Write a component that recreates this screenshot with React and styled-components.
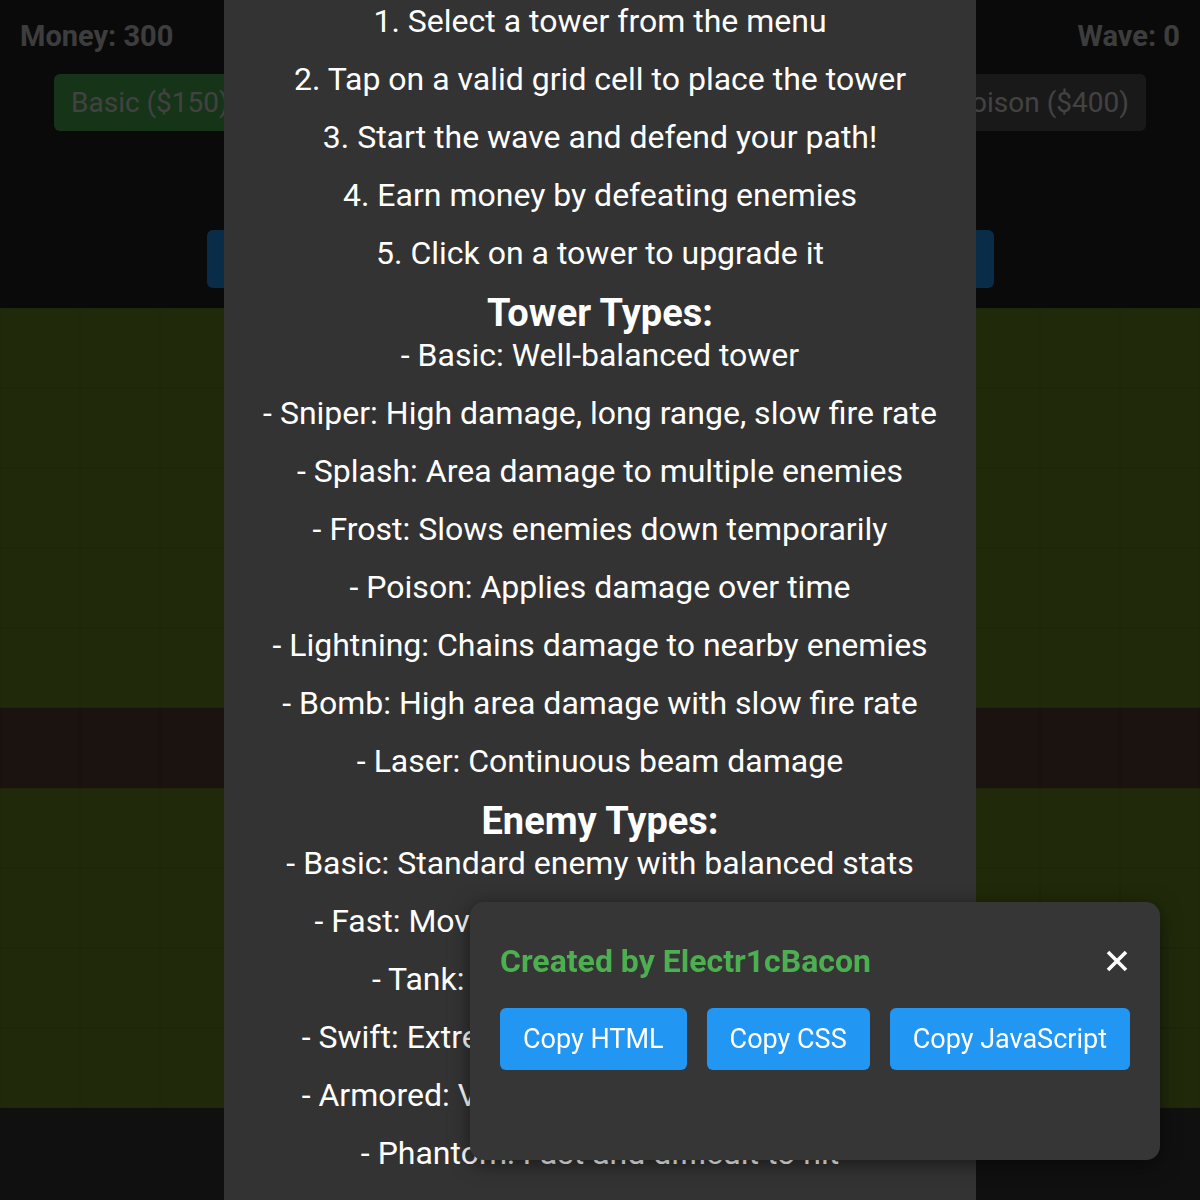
import styled, { createGlobalStyle } from "styled-components";

const GlobalStyle = createGlobalStyle`
  html, body {
    margin: 0;
    padding: 0;
    background: #242424;
    font-family: Roboto, "Liberation Sans", sans-serif;
  }
`;

const Game = styled.div`
  height: 1200px;
  display: flex;
  flex-direction: column;
  overflow: hidden;
  color: #ccc;
`;

const Header = styled.div`
  height: 72px;
  padding: 0 20px;
  display: flex;
  align-items: center;
  justify-content: space-between;
  font-size: 29px;
  font-weight: 700;
`;

const TowerRow = styled.div`
  display: flex;
  justify-content: ${(p) => (p.$center ? "center" : "space-between")};
  gap: 20px;
  padding: 0 54px;
  margin-top: ${(p) => p.$top}px;
`;

const TowerButton = styled.button`
  flex-shrink: 0;
  height: 57px;
  padding: 0 17px;
  border: none;
  border-radius: 6px;
  font-family: inherit;
  font-size: 28px;
  white-space: nowrap;
  color: #ddd;
  background: ${(p) => (p.$active ? "#4caf50" : "#555")};
`;

const Controls = styled.div`
  width: 787px;
  margin: 25px auto 0;
  display: flex;
  gap: 16px;
`;

const ControlButton = styled.button`
  flex: 1;
  height: 58px;
  border: none;
  border-radius: 6px;
  font-family: inherit;
  font-size: 28px;
  color: #fff;
  background: #2196f3;
`;

const Board = styled.div`
  margin-top: 20px;
  display: grid;
  grid-template-columns: repeat(15, 80px);
  grid-auto-rows: 80px;
`;

const Cell = styled.div`
  box-sizing: border-box;
  background: ${(p) => (p.$path ? "#5d4037" : "#6b8e23")};
  border: 1px solid rgba(0, 0, 0, 0.08);
`;

const Footer = styled.div`
  flex: 1;
  background: #383838;
`;

const Overlay = styled.div`
  position: fixed;
  inset: 0;
  background: rgba(0, 0, 0, 0.7);
`;

const Modal = styled.div`
  position: fixed;
  top: 0;
  bottom: 0;
  left: 224px;
  width: 752px;
  background: #333;
  color: #fff;
  text-align: center;
  overflow: hidden;
`;

const ModalBody = styled.div`
  margin-top: -8px;
`;

const Line = styled.p`
  margin: 0;
  font-size: 32px;
  line-height: 58px;
  white-space: nowrap;
`;

const Heading = styled.h3`
  margin: 18px 0 0;
  font-size: 38px;
  font-weight: 700;
  line-height: 26px;
`;

const Popup = styled.div`
  position: fixed;
  right: 40px;
  bottom: 40px;
  width: 690px;
  height: 258px;
  box-sizing: border-box;
  padding: 30px;
  background: #363636;
  border-radius: 14px;
  box-shadow: 0 4px 20px rgba(0, 0, 0, 0.5);
`;

const PopupHead = styled.div`
  height: 58px;
  display: flex;
  align-items: center;
  justify-content: space-between;
`;

const Credit = styled.h2`
  margin: 0;
  font-size: 32px;
  font-weight: 700;
  color: #4caf50;
`;

const Close = styled.button`
  border: none;
  background: none;
  padding: 0;
  margin-right: 2px;
  display: flex;
`;

const ButtonRow = styled.div`
  margin-top: 18px;
  display: flex;
  gap: 20px;
`;

const CopyButton = styled.button`
  height: 62px;
  padding: 0 23px;
  border: none;
  border-radius: 6px;
  font-family: inherit;
  font-size: 27px;
  color: #fff;
  background: #2196f3;
`;

const steps = [
  "1. Select a tower from the menu",
  "2. Tap on a valid grid cell to place the tower",
  "3. Start the wave and defend your path!",
  "4. Earn money by defeating enemies",
  "5. Click on a tower to upgrade it",
];

const towers = [
  "- Basic: Well-balanced tower",
  "- Sniper: High damage, long range, slow fire rate",
  "- Splash: Area damage to multiple enemies",
  "- Frost: Slows enemies down temporarily",
  "- Poison: Applies damage over time",
  "- Lightning: Chains damage to nearby enemies",
  "- Bomb: High area damage with slow fire rate",
  "- Laser: Continuous beam damage",
];

const enemies = [
  "- Basic: Standard enemy with balanced stats",
  "- Fast: Moves quickly but has less health",
  "- Tank: Slow but with high health",
  "- Swift: Extremely fast with very low health",
  "- Armored: Very tough and resists damage",
  "- Phantom: Fast and difficult to hit",
];

const cells = Array.from({ length: 150 }, (_, i) => Math.floor(i / 15) === 5);

export default function App() {
  return (
    <>
      <GlobalStyle />
      <Game>
        <Header>
          <span>Money: 300</span>
          <span>Wave: 0</span>
        </Header>
        <TowerRow $top={2}>
          <TowerButton $active>Basic ($150)</TowerButton>
          <TowerButton>Sniper ($250)</TowerButton>
          <TowerButton>Splash ($300)</TowerButton>
          <TowerButton>Frost ($200)</TowerButton>
          <TowerButton>Poison ($400)</TowerButton>
        </TowerRow>
        <TowerRow $top={17} $center>
          <TowerButton>Lightning ($350)</TowerButton>
          <TowerButton>Bomb ($450)</TowerButton>
          <TowerButton>Laser ($500)</TowerButton>
        </TowerRow>
        <Controls>
          <ControlButton>Start Wave</ControlButton>
          <ControlButton>Pause</ControlButton>
          <ControlButton>Speed x1</ControlButton>
          <ControlButton>Sell Mode</ControlButton>
        </Controls>
        <Board>
          {cells.map((path, i) => (
            <Cell key={i} $path={path} />
          ))}
        </Board>
        <Footer />
      </Game>
      <Overlay />
      <Modal>
        <ModalBody>
          {steps.map((s) => (
            <Line key={s}>{s}</Line>
          ))}
          <Heading>Tower Types:</Heading>
          {towers.map((s) => (
            <Line key={s}>{s}</Line>
          ))}
          <Heading>Enemy Types:</Heading>
          {enemies.map((s) => (
            <Line key={s}>{s}</Line>
          ))}
        </ModalBody>
      </Modal>
      <Popup>
        <PopupHead>
          <Credit>Created by Electr1cBacon</Credit>
          <Close aria-label="Close">
            <svg width="22" height="22" viewBox="0 0 22 22">
              <path d="M2 2 L20 20 M20 2 L2 20" stroke="#fff" strokeWidth="3.6" />
            </svg>
          </Close>
        </PopupHead>
        <ButtonRow>
          <CopyButton>Copy HTML</CopyButton>
          <CopyButton>Copy CSS</CopyButton>
          <CopyButton>Copy JavaScript</CopyButton>
        </ButtonRow>
      </Popup>
    </>
  );
}
